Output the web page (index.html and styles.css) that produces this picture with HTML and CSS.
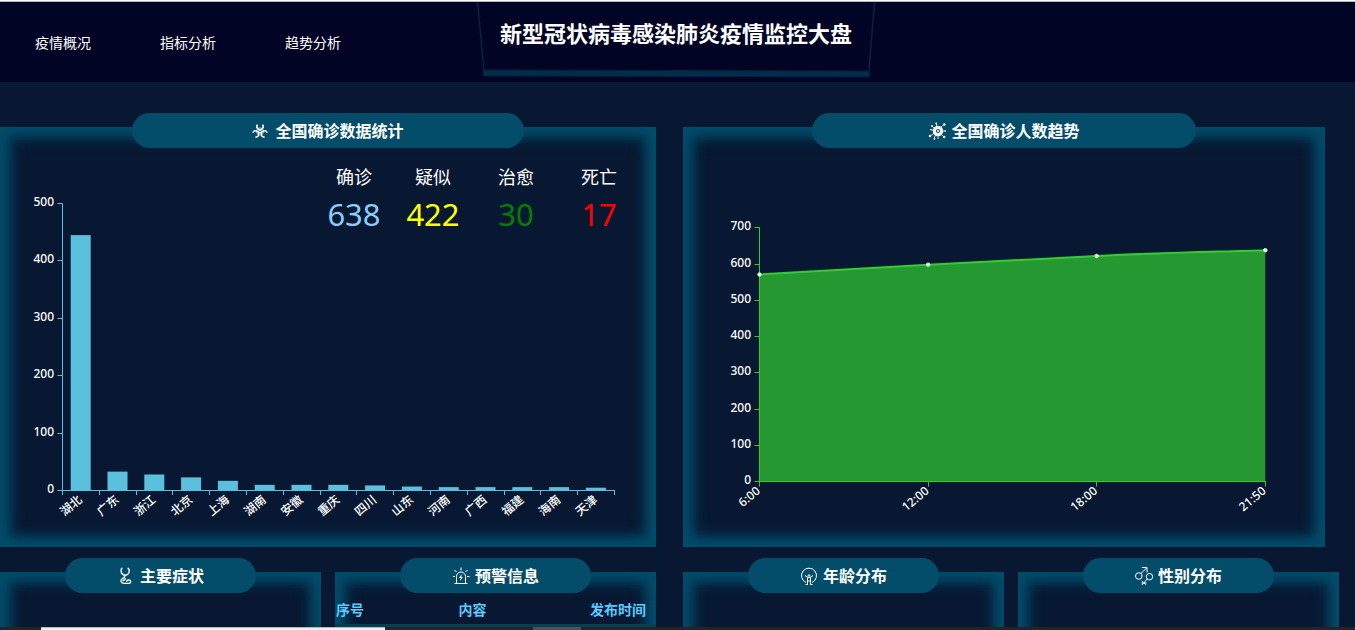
FILE: index.html
```html
<!DOCTYPE html>
<html lang="zh-CN">
<head>
<meta charset="utf-8">
<meta name="viewport" content="width=device-width, initial-scale=1">
<title>新型冠状病毒感染肺炎疫情监控大盘</title>
<link rel="stylesheet" href="styles.css">
</head>
<body>
<div class="page">
  <header class="header">
    <nav class="nav">
      <a class="nav-link" href="#overview">疫情概况</a>
      <a class="nav-link" href="#index">指标分析</a>
      <a class="nav-link" href="#trend">趋势分析</a>
    </nav>
    <div class="banner">
      <svg class="banner-frame" viewBox="0 0 398 78" preserveAspectRatio="none" aria-hidden="true">
        <path d="M0.5 0 7 68M397.500 0 392 68" fill="none" stroke="#03243f" stroke-width="1.500"/>
        <path d="M6 68 392.500 69 392 75 7 74Z" fill="#032d4a" stroke="#02203a"/>
      </svg>
      <h1 class="title">新型冠状病毒感染肺炎疫情监控大盘</h1>
    </div>
  </header>

  <main class="main">
    <div class="row row-top">
      <section class="panel" id="overview">
        <h2 class="pill">
          <svg class="icon" viewBox="0 0 18 18" fill="none" stroke="currentColor" aria-hidden="true">
            <g stroke-width="1.500">
              <path id="claw" d="M5.500 2.600A3.100 3.100 0 1 0 10.500 2.600"/>
              <use href="#claw" transform="rotate(120 8 9.400)"/>
              <use href="#claw" transform="rotate(240 8 9.400)"/>
            </g>
            <circle cx="8" cy="9.400" r="3.600" stroke-width=".8" opacity=".8"/>
            <circle cx="8" cy="9.400" r="1.800" fill="currentColor" stroke="none"/>
            <circle cx="8" cy="9.400" r=".8" fill="#034c6a" stroke="none"/>
          </svg>
          <span>全国确诊数据统计</span>
        </h2>
        <dl class="stats">
          <div class="stat"><dt>确诊</dt><dd class="confirmed">638</dd></div>
          <div class="stat"><dt>疑似</dt><dd class="suspected">422</dd></div>
          <div class="stat"><dt>治愈</dt><dd class="cured">30</dd></div>
          <div class="stat"><dt>死亡</dt><dd class="dead">17</dd></div>
        </dl>
        <svg class="chart chart-bar" id="barChart" viewBox="0 0 656 399" role="img" aria-label="各地确诊数据"></svg>
      </section>

      <section class="panel" id="trend">
        <h2 class="pill">
          <svg class="icon" viewBox="0 0 18 18" fill="none" stroke="currentColor" aria-hidden="true">
            <circle cx="10" cy="9" r="3.600" stroke-width="3.200"/>
            <circle cx="10" cy="9" r="1" fill="currentColor" stroke="none"/>
            <path stroke-width=".8" d="M9 5 8.200 1.500M12.500 5.500 15.500 3M14.500 9H17.500M13.500 12.500 16 15M10 14V17M7.500 13 6 16.500M5.800 11.500 2 14M5.800 8.500 3 7.500M6.500 6.500 4 4"/>
            <g fill="currentColor" stroke="none"><circle cx="8.200" cy="1.300" r=".9"/><circle cx="4" cy="4" r=".9"/><circle cx="2" cy="14" r="1.200"/><circle cx="16.200" cy="15" r="1.200"/><circle cx="16.300" cy="2.500" r="1.200"/><circle cx="17.200" cy="9" r=".8"/><circle cx="6.500" cy="16.800" r=".9"/><circle cx="3" cy="7.800" r=".8"/></g>
          </svg>
          <span>全国确诊人数趋势</span>
        </h2>
        <svg class="chart" id="lineChart" viewBox="0 0 642 399" role="img" aria-label="确诊人数趋势"></svg>
      </section>
    </div>

    <div class="row row-bottom">
      <div class="pair">
        <section class="panel panel-small">
          <h2 class="pill">
            <svg class="icon" viewBox="0 0 18 18" fill="none" stroke="currentColor" aria-hidden="true">
              <path d="M5.500 1.500H4.500Q3.500 4 4.500 6Q6 8.300 8.500 8.300Q11 8 12 5.500Q12.800 3 11.500 1.500H10.500" stroke-width="1.400"/>
              <path d="M8.300 8.500Q7.500 10.500 5.500 11.500Q3.500 12.800 4 14.500Q5 16.600 8 16.300H11.500Q13.500 16.500 13.700 14.700Q13.500 13 11.700 13Q9.500 13 9.500 15M5.500 13.500Q8 13.500 8.500 11" stroke-width="1.300"/>
            </svg>
            <span>主要症状</span>
          </h2>
        </section>
        <section class="panel panel-small">
          <h2 class="pill">
            <svg class="icon" viewBox="0 0 18 18" fill="none" stroke="currentColor" aria-hidden="true">
              <path d="M4.500 16V9.500a4.500 4.500 0 0 1 9 0V16M2.500 16.500H15.500M9 3.500V.5M1 9.500H3M15 9.500H17.500M4.500 5 2.500 3M13.500 5 15.500 3"/>
              <path d="M9.500 7 7 11H8.800L8 14 11 10.200H9.300Z" fill="currentColor" stroke="none"/>
            </svg>
            <span>预警信息</span>
          </h2>
          <table class="alerts">
            <colgroup><col class="col-no"><col><col class="col-time"></colgroup>
            <thead><tr><th scope="col">序号</th><th scope="col">内容</th><th scope="col">发布时间</th></tr></thead>
          </table>
        </section>
      </div>
      <div class="pair">
        <section class="panel panel-small">
          <h2 class="pill">
            <svg class="icon" viewBox="0 0 18 18" fill="none" stroke="currentColor" aria-hidden="true">
              <path d="M6 15.500A7.500 7.500 0 1 1 12 15.500"/>
              <path d="M5 8.500 8 10.500H10L13 8.500M7.500 10.500V17M10.500 10.500V17M5.500 17.500H8M10 17.500H12.500M7.500 14H10.500"/>
              <circle cx="9" cy="8.500" r=".8"/>
            </svg>
            <span>年龄分布</span>
          </h2>
        </section>
        <section class="panel panel-small">
          <h2 class="pill">
            <svg class="icon" viewBox="0 0 18 18" fill="none" stroke="currentColor" aria-hidden="true">
              <circle cx="3.800" cy="9" r="3.300"/>
              <path d="M6 6.500 11.500 1M7 .5H12V5.500M12.300 12 6.800 18M6.800 14 11.300 18M6.500 16H11.500"/>
              <circle cx="14.500" cy="9.700" r="3.200"/>
            </svg>
            <span>性别分布</span>
          </h2>
        </section>
      </div>
    </div>
  </main>

  <footer class="dock">
    <span class="dock-start"></span><span class="dock-window"></span><span class="dock-space"></span><span class="dock-tab"></span>
  </footer>
</div>
<script src="script.js"></script>
</body>
</html>
```
FILE: styles.css
```css
* { box-sizing: border-box; }

body {
  margin: 0;
  background: #081832;
  color: #fff;
  font-family: "Noto Sans", "Noto Sans CJK SC", sans-serif;
  font-size: 14px;
}

.page {
  display: flex;
  flex-direction: column;
  height: 100vh;
  overflow: hidden;
  border-top: 1px solid #fff;
}

.header {
  flex: none;
  display: grid;
  grid-template-columns: 1fr auto 1fr;
  height: 81px;
  padding-right: 3px;
  border-top: 1px solid #b4b8c4;
  background: #010425;
}

.nav {
  display: flex;
  gap: 69px;
  padding: 30px 0 0 35px;
}

.nav-link {
  color: #fff;
  font-family: "Noto Sans CJK SC", sans-serif;
  line-height: 20px;
  text-decoration: none;
  white-space: nowrap;
}

.banner {
  position: relative;
  padding: 14px 23px 0;
}

.banner-frame {
  position: absolute;
  top: 0;
  left: 0;
  width: 100%;
  height: 78px;
}

.title {
  position: relative;
  margin: 0;
  font: bold 22px/32px "Noto Sans CJK SC", sans-serif;
  white-space: nowrap;
}

.main {
  flex: 1;
  min-height: 0;
  overflow: hidden;
  padding-top: 45px;
}

.row { display: grid; }

.row-top {
  grid-template-columns: 656fr 642fr;
  column-gap: 27px;
  padding-right: 30px;
}

.row-bottom {
  grid-template-columns: 1fr 1fr;
  column-gap: 27px;
  padding: 25px 16px 0 0;
}

.pair {
  display: grid;
  grid-template-columns: 1fr 1fr;
  column-gap: 14px;
}

.panel {
  position: relative;
  display: flow-root;
  box-shadow:
    -10px 0 15px #034c6a inset,
    0 -10px 15px #034c6a inset,
    10px 0 15px #034c6a inset,
    0 10px 15px #034c6a inset;
}

.panel-small { min-height: 300px; }

.pill {
  display: flex;
  justify-content: center;
  align-items: center;
  gap: 5px;
  width: calc(60% - 1px);
  height: 35px;
  margin: -14px auto 0;
  border-radius: 18px;
  background: #034c6a;
  font: bold 16px/35px "Noto Sans CJK SC", sans-serif;
  white-space: nowrap;
}

.icon {
  flex: none;
  width: 18px;
  height: 18px;
}

.chart {
  display: block;
  width: 100%;
  height: auto;
  font-size: 12px;
  font-weight: 500;
  fill: #fff;
}

.axis { fill: none; stroke: #5bc0de; }
.bar { fill: #5bc0de; }
.axis-green { fill: none; stroke: #32cd32; }
.area { fill: #259831; }
.trend { fill: none; stroke: #32cd32; stroke-width: 2; }
.dot { fill: #fff; stroke: #b6efb6; }

.stats {
  position: absolute;
  top: 35px;
  right: 17px;
  display: grid;
  grid-template-columns: 78px 80px 86px 80px;
  margin: 0;
  text-align: center;
}

.stat dt { font: 18px/28px "Noto Sans CJK SC", sans-serif; }
.stat dd { margin: 0; font-size: 31px; line-height: 48px; }
.confirmed { color: #87cefa; }
.suspected { color: #ff0; }
.cured { color: #008000; }
.dead { color: #f00; }

.alerts {
  width: 100%;
  table-layout: fixed;
  border-collapse: collapse;
  border-bottom: 3px solid #04405c;
}

.alerts th {
  padding: 2px 0 0;
  color: #5bcaff;
  font: bold 14px/29px "Noto Sans CJK SC", sans-serif;
  white-space: nowrap;
}

.col-no { width: 30px; }
.col-time { width: 76px; }

.dock {
  flex: none;
  display: flex;
  height: 3px;
  background: #242424;
}

.dock-start { width: 41px; }
.dock-window { width: 344px; background: #f0f0f0; border-top: 1px solid #b8b8b8; }
.dock-space { width: 148px; }
.dock-tab { width: 48px; background: #505050; }
```
FILE: script.js
```js
const NS = "http://www.w3.org/2000/svg";

function add(svg, tag, attrs, text) {
  const node = document.createElementNS(NS, tag);
  for (const key in attrs) node.setAttribute(key, attrs[key]);
  if (text !== undefined) node.textContent = text;
  svg.appendChild(node);
}

function yAxis(svg, cls, x, bottom, step, count) {
  let d = `M${x} ${bottom}V${Math.round(bottom - step * count) - 0.5}`;
  for (let i = 0; i <= count; i++) {
    const y = Math.round(bottom - step * i) - 0.5;
    d += `M${x} ${y}H${x - 5}`;
    add(svg, "text", { x: x - 8.5, y: y + 2.5, "text-anchor": "end" }, i * 100);
  }
  add(svg, "path", { d, class: cls });
}

function slanted(svg, x, y, text) {
  add(svg, "text", { transform: `translate(${x} ${y}) rotate(-40)`, y: 4, "text-anchor": "end" }, text);
}

function drawBars() {
  const svg = document.getElementById("barChart");
  const data = [["湖北", 444], ["广东", 32], ["浙江", 27], ["北京", 22], ["上海", 16], ["湖南", 9], ["安徽", 9], ["重庆", 9], ["四川", 8], ["山东", 6], ["河南", 5], ["广西", 5], ["福建", 5], ["海南", 5], ["天津", 4]];
  const left = 62, base = 342, band = 36.8, scale = 287 / 500;
  let ticks = `M${left} ${base + 0.5}H${left + 553}`;
  data.forEach(([name, value], i) => {
    const x = left + band * i;
    add(svg, "rect", { x: x + 8.7, y: base - value * scale, width: 20, height: value * scale, class: "bar" });
    slanted(svg, x + band / 2, 350, name);
  });
  for (let i = 0; i <= data.length; i++) {
    ticks += `M${Math.round(left + band * i) + 0.5} ${base}v5`;
  }
  add(svg, "path", { d: ticks, class: "axis" });
  yAxis(svg, "axis", 62.5, 343, 57.4, 5);
}

function drawTrend() {
  const svg = document.getElementById("lineChart");
  const points = [["6:00", 571], ["12:00", 598], ["18:00", 622], ["21:50", 638]];
  const left = 76.5, base = 333.5, band = 168.6, scale = 36.25 / 100;
  const xy = points.map(([, v], i) => [left + band * i, base - v * scale]);
  const line = `M${xy[0]}C${left + 56} 123.500 ${left + 112} 120 ${xy[1]}S${left + 281} 111 ${xy[2]}S${left + 450} 104 ${xy[3]}`;
  add(svg, "path", { d: `${line}V${base}H${left}Z`, class: "area" });
  let ticks = `M${left} ${base}H${left + band * 3 + 0.5}`;
  points.forEach(([time], i) => {
    ticks += `M${Math.floor(left + band * i) + 0.5} ${base}v5`;
    slanted(svg, left + band * i - 1, 341, time);
  });
  add(svg, "path", { d: ticks, class: "axis-green" });
  yAxis(svg, "axis-green", left, 334, 36.25, 7);
  add(svg, "path", { d: line, class: "trend" });
  xy.forEach(([cx, cy]) => add(svg, "circle", { cx, cy, r: 1.8, class: "dot" }));
}

drawBars();
drawTrend();
```
